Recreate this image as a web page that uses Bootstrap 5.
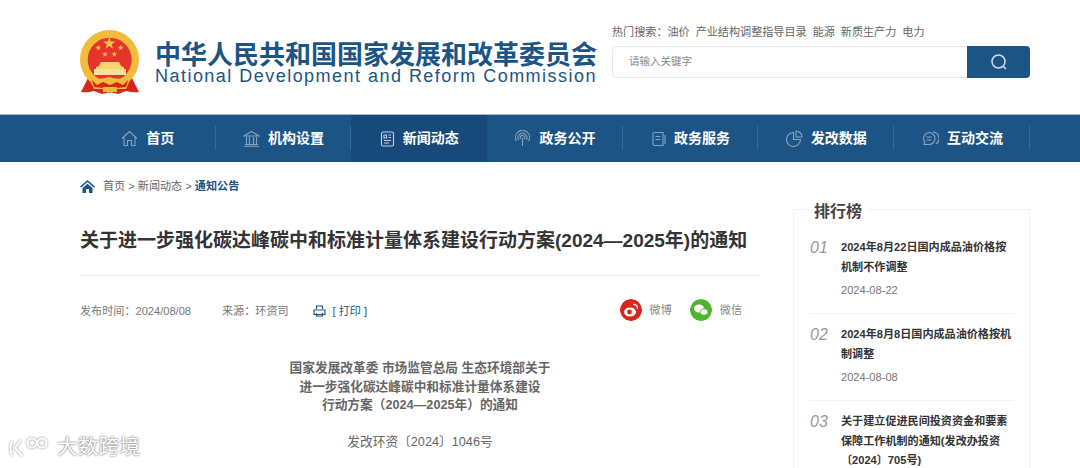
<!DOCTYPE html>
<html lang="zh">
  <head>
    <meta charset="utf-8" />
    <title>关于进一步强化碳达峰碳中和标准计量体系建设行动方案的通知</title>
    <link
      rel="stylesheet"
      href="https://cdn.jsdelivr.net/npm/bootstrap@5.3.0/dist/css/bootstrap.min.css"
    />
    <style>
      html, body { height: 468px; overflow: hidden; }
      body { font-family: "Liberation Sans", "Noto Sans CJK SC", sans-serif; font-size: 11.1px; color: #666; background: #fff; }
      .site-wrap { width: 950px; margin-left: 80px; }
      .top-head { height: 114px; }
      .emblem { width: 60px; height: 66px; margin-top: 30px; }
      .brand { margin-left: 15px; margin-top: 43px; color: #1c5485; }
      .brand-cn { font-size: 26px; font-weight: 700; line-height: 24px; white-space: nowrap; }
      .brand-en { font-family: "Liberation Sans", sans-serif; font-size: 18px; line-height: 18px; letter-spacing: 1.47px; white-space: nowrap; }
      .search-side { width: 418px; padding-top: 24px; }
      .hot-line { font-size: 11.1px; line-height: 16px; color: #666; white-space: nowrap; }
      .hot-line span { margin-right: 6px; }
      .search-bar { height: 32px; margin-top: 6px; border: 1px solid #e6e8ec; border-radius: 4px; }
      .search-text { padding-left: 16px; line-height: 29px; color: #888; font-size: 10.5px; }
      .search-btn { width: 63px; margin: -1px -1px -1px 0; background: #1c5485; border-radius: 0 4px 4px 0; }
      .main-nav { height: 48px; background: #1c5485; border-top: 1px solid #9fb9d0; }
      .nav-cell { width: 135.7px; height: 47px; color: #fff; font-size: 14px; font-weight: 700; gap: 8px; position: relative; }
      .nav-cell::after { content: ""; position: absolute; right: 0; top: 11px; height: 24px; width: 1px; background: #3a6b97; }
      .nav-cell.now { background: #174a7a; }
      .nav-cell.now::after { display: none; }
      .crumb { height: 24px; margin-top: 12px; font-size: 11.1px; color: #666; }
      .crumb b { color: #1c5485; }
      .article-col { width: 680px; }
      .art-title { font-size: 19px; font-weight: 700; color: #333; line-height: 26px; margin: 30px 0 0; padding-bottom: 21px; border-bottom: 1px solid #f0f0f0; white-space: nowrap; }
      .meta-row { margin-top: 22px; height: 24px; color: #777; font-size: 11.1px; }
      .meta-left { padding-top: 2px; }
      .src-gap { margin-left: 31px; }
      .print-ico { margin-left: 24px; }
      .print-link { color: #1c5485; margin-left: 7px; }
      .share-box { margin-right: 18px; }
      .share-name { color: #888; margin-left: 8px; }
      .share-dot { width: 22px; height: 22px; border-radius: 50%; }
      .share-dot.second { margin-left: 18px; }
      .art-body { margin-top: 37px; text-align: center; color: #666; font-size: 12.7px; line-height: 18.5px; }
      .art-body p { margin-top: 18px; }
      .side-col { width: 237px; margin-left: 33px; margin-top: 47px; border: 1px solid #f3f3f3; border-bottom: 0; height: 259px; padding: 0 15px; flex-shrink: 0; }
      .side-head { width: fit-content; margin: -9px 0 4px 0; padding: 0 5px; background: #fff; font-size: 16px; font-weight: 700; color: #444; line-height: 22px; }
      .rank-item { height: 87px; border-bottom: 1px solid #f2f2f2; padding-top: 11px; }
      .rank-item.endless { border-bottom: 0; height: auto; padding-top: 11px; }
      .rank-no { width: 32px; font-style: italic; font-size: 16px; line-height: 20px; color: #999; flex: none; padding-left: 1px; }
      .rank-txt { color: #333; font-weight: 700; line-height: 19.5px; font-size: 11.1px; }
      .rank-date { color: #777; margin-top: 4px; line-height: 18px; font-size: 11.1px; }
      .wm { position: absolute; left: 8px; top: 433px; color: #fff; font-size: 20.500px; letter-spacing: .3px; line-height: 28px; gap: 9px; text-shadow: 0 0 2px #888, 0 0 2px #888; }
      .wm svg { filter: drop-shadow(0 0 1px #888); }
    </style>
  </head>

  <body>
    <div class="site-wrap d-flex justify-content-between top-head">
      <div class="d-flex">
        <svg class="emblem" viewBox="0 0 60 66">
          <defs>
            <polygon id="star5" points="0,-1 .588,.809 -.951,-.309 .951,-.309 -.588,.809" fill="#f7c744" />
          </defs>
          <path d="M9 46L1 62q6 1 13-1l8 3 8-2 8 2 8-3q7 2 13 1l-8-16z" fill="#d8261c" />
          <circle cx="29.500" cy="29.500" r="29.500" fill="#f2bb3a" />
          <circle cx="29.700" cy="29.700" r="22" fill="#e5352a" />
          <use href="#star5" transform="translate(29.300 13.500) scale(6.500)" />
          <use href="#star5" transform="translate(18.300 17.700) scale(3)" />
          <use href="#star5" transform="translate(40.700 17.700) scale(3)" />
          <use href="#star5" transform="translate(25 24.300) scale(3)" />
          <use href="#star5" transform="translate(34.300 24.300) scale(3)" />
          <path d="M21 32h18l2 4 3 1v2H16v-2l3-1z" fill="#f6d46e" />
          <path d="M14 39h32v6H14z" fill="#f9e09a" />
          <path d="M8 46q11 5 21 1q11 4 23-1l-6 13H14z" fill="#f2bb3a" />
          <path d="M12 50l5 5 6-3 7 3 7-3 6 3 5-5-2 7-9 1-7 5-7-5-9-1z" fill="#d8261c" />
          <path d="M23 57h14v5H23z" fill="#f2bb3a" />
        </svg>
        <div class="brand">
          <div class="brand-cn">中华人民共和国国家发展和改革委员会</div>
          <div class="brand-en">National Development and Reform Commission</div>
        </div>
      </div>
      <div class="search-side">
        <div class="hot-line"><span>热门搜索：油价</span><span>产业结构调整指导目录</span><span>能源</span><span>新质生产力</span><span>电力</span></div>
        <div class="search-bar d-flex justify-content-between">
          <div class="search-text">请输入关键字</div>
          <div class="search-btn d-flex align-items-center justify-content-center">
            <svg width="18" height="18" viewBox="0 0 18 18" fill="none" stroke="#cfdde9" stroke-width="1.500"><circle cx="8.500" cy="8.500" r="6.500" /><path d="M13 13l3 3" /></svg>
          </div>
        </div>
      </div>
    </div>

    <div class="main-nav">
      <div class="site-wrap d-flex">
        <div class="nav-cell d-flex align-items-center justify-content-center">
          <svg width="17" height="17" viewBox="0 0 17 17" fill="none" stroke="#86a5c2" stroke-width="1.100"><path d="M1 8.500L8.500 1.500 16 8.500M3 7v8.500h3.500V10.500h4v5H14V7" /></svg>首页
        </div>
        <div class="nav-cell d-flex align-items-center justify-content-center">
          <svg width="17" height="17" viewBox="0 0 17 17" fill="none" stroke="#86a5c2" stroke-width="1.100"><path d="M1 6L8.500 1.500 16 6zM3.500 7v7M6.500 7v7M10.500 7v7M13.500 7v7M2 14.500h13M1 16.200h15" /></svg>机构设置
        </div>
        <div class="nav-cell now d-flex align-items-center justify-content-center">
          <svg width="15" height="16" viewBox="0 0 15 16" fill="none" stroke="#c3d2e0" stroke-width="1.100"><rect x="1.500" y="1" width="12" height="14" rx="1.500" /><path d="M4 4h2.500v3H4zM8.500 4H11M8.500 6.500H11M4 9.500h7M4 12h5" /></svg>新闻动态
        </div>
        <div class="nav-cell d-flex align-items-center justify-content-center">
          <svg width="17" height="17" viewBox="0 0 17 17" fill="none" stroke="#86a5c2" stroke-width="1.100"><path d="M2.500 11a7 7 0 1 1 12 0M4.800 10a4.400 4.400 0 1 1 7.400 0M6.800 9a2.200 2.200 0 1 1 3.400 0M8.500 8v8" /></svg>政务公开
        </div>
        <div class="nav-cell d-flex align-items-center justify-content-center">
          <svg width="15" height="16" viewBox="0 0 15 16" fill="none" stroke="#86a5c2" stroke-width="1.100"><path d="M2 3a1.500 1.500 0 0 1 1.500-1.500H12V14.500H3.500A1.500 1.500 0 0 1 2 13zM4.500 5.500h5M4.500 8.500h5M14 4v9" /></svg>政务服务
        </div>
        <div class="nav-cell d-flex align-items-center justify-content-center">
          <svg width="17" height="17" viewBox="0 0 17 17" fill="none" stroke="#86a5c2" stroke-width="1.100"><path d="M7.500 2.500a7 7 0 1 0 7 7h-7z" /><path d="M10 1a6 6 0 0 1 6 6h-6z" /></svg>发改数据
        </div>
        <div class="nav-cell d-flex align-items-center justify-content-center">
          <svg width="18" height="17" viewBox="0 0 18 17" fill="none" stroke="#86a5c2" stroke-width="1.100"><path d="M8 2.500a6 6 0 0 1 0 12H3l1-2.200A6 6 0 0 1 8 2.500zM5.500 7h5M5.500 10h5M12 2a6.500 6.500 0 0 1 3 12" /></svg>互动交流
        </div>
      </div>
    </div>

    <div class="site-wrap d-flex">
      <div class="article-col">
        <div class="crumb d-flex align-items-center">
          <svg class="me-2" width="15" height="13" viewBox="0 0 15 13" fill="#1c5485"><path d="M7.500 0L15 6.500l-1 1.200-6.500-5.600L1 7.700 0 6.500zM2.500 8l5-4.300 5 4.300v5H9V9H6v4H2.500z" /></svg>
          <span>首页 &gt; 新闻动态 &gt; <b>通知公告</b></span>
        </div>
        <h1 class="art-title">关于进一步强化碳达峰碳中和标准计量体系建设行动方案(2024—2025年)的通知</h1>
        <div class="meta-row d-flex align-items-center justify-content-between">
          <div class="meta-left d-flex align-items-center">
            <span>发布时间：2024/08/08</span>
            <span class="src-gap">来源：环资司</span>
            <svg class="print-ico" width="13" height="12" viewBox="0 0 13 12" fill="none" stroke="#1c5485" stroke-width="1.200"><path d="M3.500 4V1h6v3M1 5h11v4.500H1zM3.500 8v3h6V8" /></svg>
            <span class="print-link">[ 打印 ]</span>
          </div>
          <div class="share-box d-flex align-items-center">
            <svg class="share-dot" viewBox="0 0 22 22"><circle cx="11" cy="11" r="11" fill="#d9261c" /><ellipse cx="10" cy="13" rx="6" ry="4.500" fill="#fff" /><circle cx="9.500" cy="13" r="2.400" fill="#d9261c" /><path d="M13 5.500q4.500-.5 4.500 4" fill="none" stroke="#fff" stroke-width="1.300" /></svg>
            <span class="share-name">微博</span>
            <svg class="share-dot second" viewBox="0 0 22 22"><circle cx="11" cy="11" r="11" fill="#4fb52f" /><ellipse cx="9" cy="9.500" rx="5" ry="4" fill="#fff" /><ellipse cx="14" cy="13" rx="4" ry="3.200" fill="#fff" stroke="#4fb52f" stroke-width=".8" /></svg>
            <span class="share-name">微信</span>
          </div>
        </div>
        <div class="art-body">
          <div class="fw-bold">国家发展改革委 市场监管总局 生态环境部关于<br />进一步强化碳达峰碳中和标准计量体系建设<br />行动方案（2024—2025年）的通知</div>
          <p>发改环资〔2024〕1046号</p>
        </div>
      </div>
      <div class="side-col">
        <div class="side-head">排行榜</div>
        <div class="rank-item d-flex">
          <div class="rank-no">01</div>
          <div><div class="rank-txt">2024年8月22日国内成品油价格按机制不作调整</div><div class="rank-date">2024-08-22</div></div>
        </div>
        <div class="rank-item d-flex">
          <div class="rank-no">02</div>
          <div><div class="rank-txt">2024年8月8日国内成品油价格按机制调整</div><div class="rank-date">2024-08-08</div></div>
        </div>
        <div class="rank-item endless d-flex">
          <div class="rank-no">03</div>
          <div><div class="rank-txt">关于建立促进民间投资资金和要素保障工作机制的通知(发改办投资〔2024〕705号)</div></div>
        </div>
      </div>
    </div>

    <div class="wm d-flex align-items-center">
      <svg width="40" height="26" viewBox="0 0 40 26" fill="none" stroke="#fff" stroke-width="2"><path d="M4 7q-3 7 0 15M13 6L7 14l7 8" /><circle cx="24" cy="9" r="4.500" /><circle cx="34" cy="9" r="4.500" /></svg>
      <span>大数跨境</span>
    </div>

    <script src="https://cdn.jsdelivr.net/npm/bootstrap@5.3.0/dist/js/bootstrap.bundle.min.js"></script>
  </body>
</html>
